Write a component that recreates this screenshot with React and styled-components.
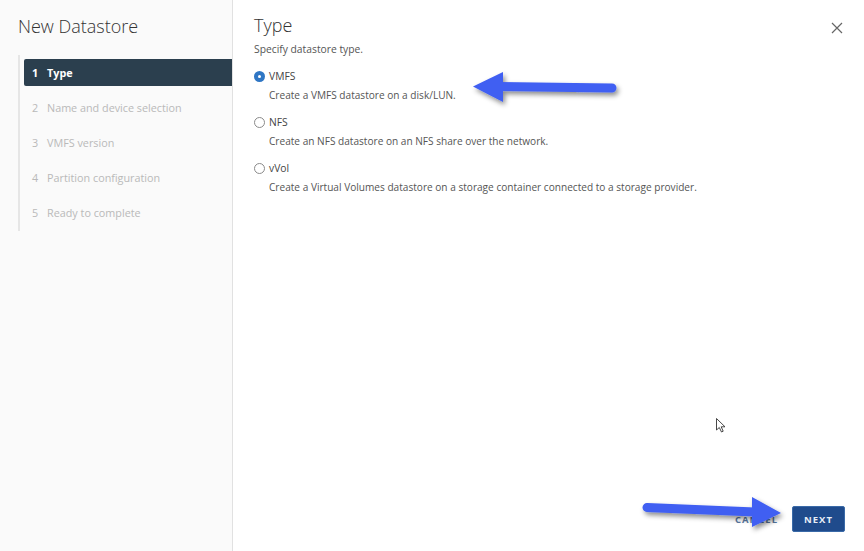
import React from "react";
import styled, { createGlobalStyle } from "styled-components";

const GlobalStyle = createGlobalStyle`
  html, body {
    margin: 0;
    padding: 0;
    background: #ffffff;
  }
  body {
    font-family: "Open Sans", "Noto Sans", "Liberation Sans", sans-serif;
    color: #333;
  }
`;

const Modal = styled.div`
  position: relative;
  display: flex;
  width: 864px;
  height: 551px;
  background: #fff;
  overflow: hidden;
`;

// Left column with wizard steps
const Sidebar = styled.aside`
  width: 233px;
  flex-shrink: 0;
  background: #fafafa;
  border-right: 1px solid #e1e1e1;
  box-sizing: border-box;
  padding: 14px 0 0 18px;
`;

const WizardTitle = styled.h1`
  margin: 0 0 17px 0;
  font-size: 18px;
  font-weight: 300;
  color: #333;
  line-height: 24px;
`;

const StepList = styled.ol`
  list-style: none;
  margin: 0;
  padding: 4px 0 5px 0;
  border-left: 2px solid #e6e6e6;
  display: flex;
  flex-direction: column;
  gap: 8px;
`;

const Step = styled.li`
  display: flex;
  align-items: center;
  height: 27px;
  margin-left: 4px;
  padding-left: 8px;
  font-size: 10.8px;
  border-radius: 2px 0 0 2px;
  background: ${(p) => (p.$active ? "#2b3f4e" : "transparent")};
  color: ${(p) => (p.$active ? "#fff" : "#b9b9b9")};
  font-weight: ${(p) => (p.$active ? 700 : 400)};
`;

const StepNum = styled.span`
  width: 15px;
`;

// Right column
const Main = styled.section`
  flex: 1;
  display: flex;
  flex-direction: column;
  padding: 13px 19px 19px 21px;
  position: relative;
`;

const Header = styled.div`
  display: flex;
  justify-content: space-between;
  align-items: flex-start;
`;

const PageTitle = styled.h2`
  margin: 0;
  font-size: 18px;
  font-weight: 300;
  color: #333;
  line-height: 24px;
`;

const CloseButton = styled.button`
  border: none;
  background: transparent;
  padding: 0;
  margin: 9px 2px 0 0;
  width: 12px;
  height: 12px;
  display: flex;
  cursor: pointer;
`;

const Hint = styled.p`
  margin: 5px 0 13px 0;
  font-size: 10.3px;
  color: #555;
`;

const Options = styled.div`
  display: flex;
  flex-direction: column;
  gap: 13px;
`;

const Option = styled.label`
  display: flex;
  flex-direction: column;
  gap: 5px;
`;

const OptionHead = styled.span`
  display: flex;
  align-items: center;
  gap: 4px;
  font-size: 10.3px;
  color: #444;
`;

const Radio = styled.span`
  width: 11px;
  height: 11px;
  border-radius: 50%;
  box-sizing: border-box;
  display: inline-flex;
  align-items: center;
  justify-content: center;
  border: ${(p) => (p.$checked ? "none" : "1px solid #8a8a8a")};
  background: ${(p) => (p.$checked ? "#2f76c4" : "#fff")};
  &::after {
    content: "";
    width: 3px;
    height: 3px;
    border-radius: 50%;
    background: #fff;
    display: ${(p) => (p.$checked ? "block" : "none")};
  }
`;

const OptionDesc = styled.span`
  padding-left: 15px;
  font-size: 10.1px;
  color: #555;
`;

const Footer = styled.div`
  margin-top: auto;
  display: flex;
  justify-content: flex-end;
  align-items: center;
  gap: 14px;
`;

const GhostButton = styled.button`
  border: none;
  background: transparent;
  color: #5877a0;
  font-family: inherit;
  font-size: 9.5px;
  font-weight: 700;
  letter-spacing: 1px;
  padding: 0;
`;

const PrimaryButton = styled.button`
  width: 53px;
  height: 26px;
  background: #1f4b8c;
  border: 1px solid #3a6aa8;
  border-radius: 2px;
  color: #e8eef6;
  font-family: inherit;
  font-size: 9.5px;
  font-weight: 700;
  letter-spacing: 1px;
  padding: 0;
`;

// Overlay layer for the callout arrows and pointer
const Overlay = styled.svg`
  position: absolute;
  left: 0;
  top: 0;
  pointer-events: none;
`;

const steps = [
  "Type",
  "Name and device selection",
  "VMFS version",
  "Partition configuration",
  "Ready to complete",
];

const types = [
  { name: "VMFS", desc: "Create a VMFS datastore on a disk/LUN.", checked: true },
  { name: "NFS", desc: "Create an NFS datastore on an NFS share over the network." },
  {
    name: "vVol",
    desc: "Create a Virtual Volumes datastore on a storage container connected to a storage provider.",
  },
];

const Arrow = ({ x1, y1, x2, y2, tip, top, bottom }) => (
  <g>
    <line x1={x1} y1={y1} x2={x2} y2={y2} stroke="#3f5ef2" strokeWidth="9" strokeLinecap="round" />
    <polygon points={`${tip} ${top} ${bottom}`} fill="#3f5ef2" />
  </g>
);

export default function App() {
  return (
    <>
      <GlobalStyle />
      <Modal>
        <Sidebar>
          <WizardTitle>New Datastore</WizardTitle>
          <StepList>
            {steps.map((s, i) => (
              <Step key={s} $active={i === 0}>
                <StepNum>{i + 1}</StepNum>
                {s}
              </Step>
            ))}
          </StepList>
        </Sidebar>
        <Main>
          <Header>
            <PageTitle>Type</PageTitle>
            <CloseButton aria-label="close">
              <svg width="12" height="12" viewBox="0 0 12 12">
                <path d="M1 1 L11 11 M11 1 L1 11" stroke="#666" strokeWidth="1.2" />
              </svg>
            </CloseButton>
          </Header>
          <Hint>Specify datastore type.</Hint>
          <Options>
            {types.map((t) => (
              <Option key={t.name}>
                <OptionHead>
                  <Radio $checked={t.checked} />
                  {t.name}
                </OptionHead>
                <OptionDesc>{t.desc}</OptionDesc>
              </Option>
            ))}
          </Options>
          <Footer>
            <GhostButton>CANCEL</GhostButton>
            <PrimaryButton>NEXT</PrimaryButton>
          </Footer>
        </Main>
        <Overlay width="864" height="551" viewBox="0 0 864 551">
          <defs>
            <filter id="drop" x="-20%" y="-50%" width="140%" height="200%">
              <feDropShadow dx="2" dy="3" stdDeviation="2.5" floodColor="#000" floodOpacity="0.45" />
            </filter>
          </defs>
          <g filter="url(#drop)">
            <Arrow x1={499} y1={86.5} x2={612} y2={88} tip="473,86.5" top="503,72" bottom="503,102" />
            <Arrow x1={647} y1={507.5} x2={755} y2={512} tip="781,513" top="752,497" bottom="752,527" />
          </g>
          <path
            d="M716.5 418.5 L716.5 430 L719.3 427.5 L721.5 432 L723.2 431.2 L721.2 426.8 L725 426.8 Z"
            fill="#fff"
            stroke="#333"
            strokeWidth="0.9"
            strokeLinejoin="round"
          />
        </Overlay>
      </Modal>
    </>
  );
}
